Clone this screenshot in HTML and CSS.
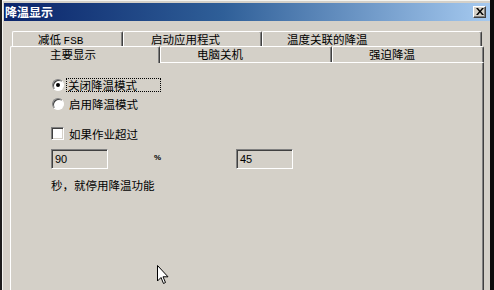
FILE: index.html
```html
<!DOCTYPE html>
<html>
<head>
<meta charset="utf-8">
<link rel="stylesheet" href="styles.css">
</head>
<body>
<div class="window">
  <div class="titlebar">
    <span class="title">降温显示</span>
    <span class="close"><svg width="8" height="7" viewBox="0 0 8 7"><path d="M0 0h2l2 2.5L6 0h2L5 3.5 8 7H6L4 4.5 2 7H0l3-3.5z" fill="#000"/></svg></span>
  </div>
  <div class="tabs">
    <div class="tabrow back">
      <div class="tab t1">减低 <span class="mono">FSB</span></div>
      <div class="tab t2">启动应用程式</div>
      <div class="tab t3">温度关联的降温</div>
    </div>
    <div class="tabrow front">
      <div class="tab active t4">主要显示</div>
      <div class="tab t5">电脑关机</div>
      <div class="tab t6">强迫降温</div>
    </div>
  </div>
  <div class="panel">
    <div class="opt first">
      <span class="radio checked"></span>
      <span class="label focus">关闭降温模式</span>
    </div>
    <div class="opt">
      <span class="radio"></span>
      <span class="label">启用降温模式</span>
    </div>
    <div class="opt check-row">
      <span class="checkbox"></span>
      <span class="label">如果作业超过</span>
    </div>
    <div class="fields">
      <span class="field f1">90</span>
      <span class="pct">%</span>
      <span class="field f2">45</span>
    </div>
    <div class="note">秒，就停用降温功能</div>
  </div>
  <svg class="cursor" width="12" height="20" viewBox="0 0 12 20">
    <path d="M0.5 0.5 L0.5 16 L4 12.5 L6.5 18.5 L8.5 17.5 L6 11.8 L11 11.8 Z" fill="#fff" stroke="#000" stroke-width="1"/>
  </svg>
</div>
</body>
</html>
```
FILE: styles.css
```css
html, body {
  margin: 0;
  padding: 0;
  background: #101010;
}
body {
  font-family: "Noto Sans CJK SC", "Noto Sans", sans-serif;
  font-size: 11.5px;
  color: #000;
}
.window {
  position: relative;
  width: 494px;
  height: 290px;
  box-sizing: border-box;
  background: #D4D0C8;
  border-left: 2px solid #1c1c1c;
  border-right: 4px solid #0c0c0c;
  padding-top: 3px;
  overflow: hidden;
  box-shadow: inset 1px 1px #f4f4f0;
}
.titlebar {
  height: 18px;
  margin-left: 2px;
  background: linear-gradient(to right, #0A246A 0%, #2f5f98 45%, #A6CAF0 100%);
  display: flex;
  align-items: center;
  justify-content: space-between;
  padding: 0 3px 0 1px;
}
.title {
  color: #fff;
  font-weight: bold;
  font-size: 12px;
  line-height: 18px;
}
.close {
  width: 13px;
  height: 12px;
  box-sizing: border-box;
  background: #D4D0C8;
  border: 1px solid;
  border-color: #fff #404040 #404040 #fff;
  box-shadow: inset -1px -1px #808080;
  display: flex;
  align-items: center;
  justify-content: center;
  margin-right: 1px;
}
.close svg { display: block; margin-top: -1px; }
.tabs {
  margin-top: 10px;
  display: flex;
  flex-direction: column;
}
.tabrow {
  display: flex;
  align-items: flex-end;
}
.back {
  margin-left: 10px;
  height: 15px;
}
.front {
  margin-left: 8px;
  height: 16px;
}
.tab {
  box-sizing: border-box;
  height: 15px;
  border-top: 1px solid #fff;
  border-left: 1px solid #fff;
  border-right: 1px solid #404040;
  box-shadow: inset -1px 0 #808080;
  border-radius: 2px 2px 0 0;
  line-height: 15px;
  white-space: nowrap;
}
.front .tab { height: 16px; line-height: 14px; }
.t1 { width: 111px; padding-left: 25px; }
.t2 { width: 139px; padding-left: 27px; }
.t3 { width: 220px; padding-left: 24px; }
.t4 { width: 150px; padding-left: 39px; }
.t5 { width: 172px; padding-left: 36px; }
.t6 { width: 152px; padding-left: 36px; }
.front .tab.active {
  height: 17px;
  margin-bottom: -1px;
  position: relative;
  z-index: 2;
  background: #D4D0C8;
}
.mono {
  font-family: "Liberation Mono", monospace;
  font-size: 11px;
}
.panel {
  margin-left: 8px;
  width: 474px;
  height: 240px;
  box-sizing: border-box;
  border-top: 1px solid #fff;
  border-left: 1px solid #fff;
  border-right: 1px solid #404040;
  box-shadow: inset -1px 0 #808080;
  padding: 12px 0 0 40px;
}
.opt {
  height: 19px;
  display: flex;
  align-items: center;
}
.check-row { margin-top: 11px; }
.radio {
  width: 12px;
  height: 12px;
  box-sizing: border-box;
  border-radius: 50%;
  border: 1px solid;
  border-color: #808080 #fff #fff #808080;
  box-shadow: inset 1px 1px #404040;
  background: #fff;
  margin-left: 1px;
  margin-right: 4px;
  position: relative;
}
.radio.checked::after {
  content: "";
  position: absolute;
  left: 3px;
  top: 3px;
  width: 4px;
  height: 4px;
  border-radius: 50%;
  background: #000;
}
.checkbox {
  width: 13px;
  height: 13px;
  box-sizing: border-box;
  border: 1px solid;
  border-color: #808080 #fff #fff #808080;
  box-shadow: inset 1px 1px #404040, inset -1px -1px #D4D0C8;
  background: #fff;
  margin-right: 4px;
}
.label {
  line-height: 12px;
  padding: 0 1px;
}
.label.focus {
  outline: 1px dotted #000;
  padding: 0 23px 0 1px;
  margin-left: -1px;
}
.fields {
  margin-top: 6px;
  display: flex;
  align-items: center;
  height: 20px;
}
.field {
  box-sizing: border-box;
  height: 20px;
  width: 57px;
  border: 1px solid;
  border-color: #808080 #fff #fff #808080;
  box-shadow: inset 1px 1px #404040, inset -1px -1px #D4D0C8;
  font-family: "Liberation Sans", sans-serif;
  font-size: 11px;
  line-height: 18px;
  padding-left: 3px;
}
.pct {
  margin-left: 46px;
  font-family: "Liberation Sans", sans-serif;
  font-size: 8px;
  font-weight: bold;
  width: 82px;
  margin-top: -4px;
}
.note {
  margin-top: 8px;
  line-height: 16px;
}
.cursor {
  position: absolute;
  left: 155px;
  top: 265px;
}
```
